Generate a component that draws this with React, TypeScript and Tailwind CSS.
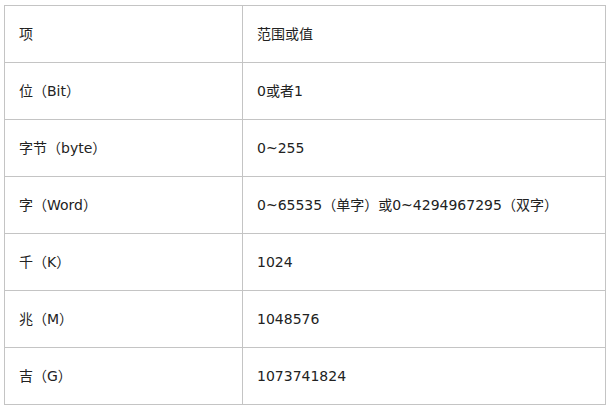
import React from "react";

interface Row {
  name: string;
  value: string;
}

const rows: Row[] = [
  { name: "项", value: "范围或值" },
  { name: "位（Bit）", value: "0或者1" },
  { name: "字节（byte）", value: "0~255" },
  { name: "字（Word）", value: "0~65535（单字）或0~4294967295（双字）" },
  { name: "千（K）", value: "1024" },
  { name: "兆（M）", value: "1048576" },
  { name: "吉（G）", value: "1073741824" },
];

const App: React.FC = () => {
  return (
    <div className="bg-white w-[609px] h-[409px] pl-[4px] pt-[5px] font-['DejaVu_Sans','Noto_Sans_CJK_SC',sans-serif] text-[14px] text-[#222]">
      <table className="border-collapse w-[602px] table-fixed">
        <colgroup>
          <col className="w-[238px]" />
          <col />
        </colgroup>
        <tbody>
          {rows.map((row, i) => (
            <tr key={i} className="h-[57px]">
              <td className="border border-[#c4c4c4] pl-[14px] align-middle">{row.name}</td>
              <td className="border border-[#c4c4c4] pl-[14px] align-middle">{row.value}</td>
            </tr>
          ))}
        </tbody>
      </table>
    </div>
  );
};

export default App;
